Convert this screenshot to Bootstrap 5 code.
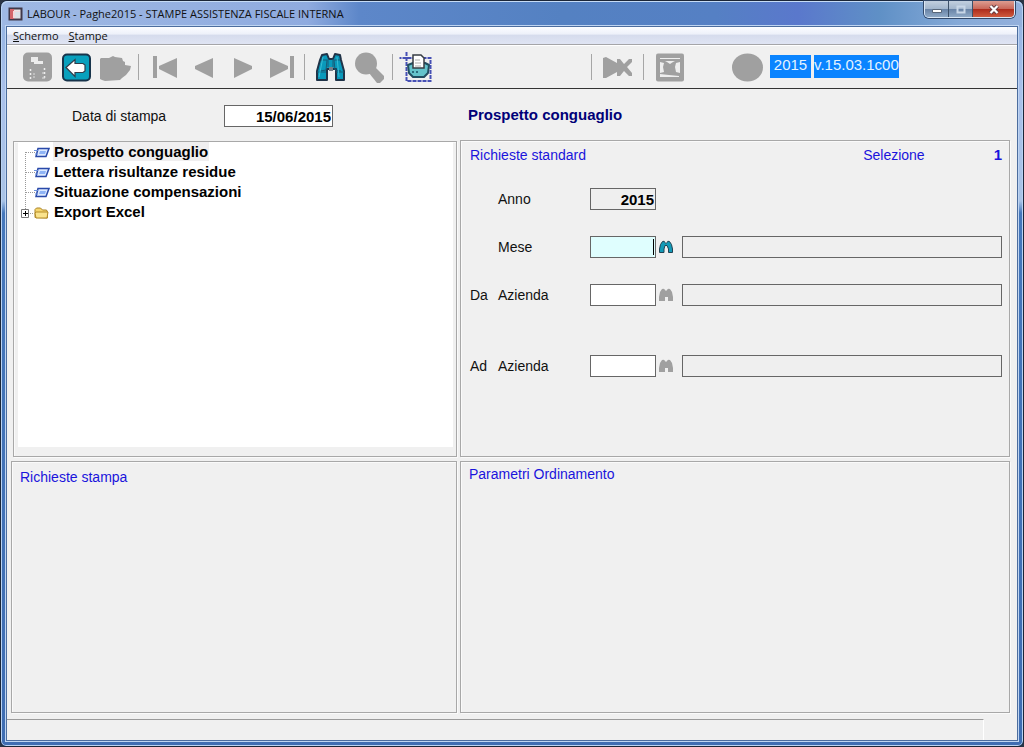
<!DOCTYPE html>
<html lang="it">
<head>
<meta charset="utf-8">
<meta name="viewport" content="width=device-width, initial-scale=1">
<title>LABOUR - Paghe2015</title>
<link href="https://cdn.jsdelivr.net/npm/bootstrap@5.3.0/dist/css/bootstrap.min.css" rel="stylesheet">
<style>
  body { background: #2a3444; font: 14px/20px "Liberation Sans", Arial, sans-serif; color: #111; }
  .window { border: 1px solid #1b2638; border-radius: 7px 7px 6px 6px; padding: 0 6px 6px;
    background: linear-gradient(#8fb0e0 0, #a9c0ea 90px, #a9c3e6 200px, #4577bb 212px, #3f6db2 100%);
    box-shadow: inset 0 0 0 1px #b9d3f3; }
  .titlebar { height: 26px; margin: 0 -5px; padding-left: 6px; gap: 3px; border-radius: 6px 6px 0 0;
    background: linear-gradient(90deg, #9fb9e4 0, #8fabdf 30%, #5d87c9 35%, #5481c2 55%, #5580c4 70%, #5a78cc 78%, #5f90c6 86%, #86aad8 94%, #93b0dc 100%);
    box-shadow: inset 0 1px #c6dcf6; }
  .ui-small { font: 11px/16px "Open Sans", "Noto Sans", sans-serif; color: #111; }
  .titlebar h1 { margin: 0; }
  .caption-set { height: 17px; margin-right: 7px; border: 1px solid #dbe7f5; border-top: 0; border-radius: 0 0 5px 5px; overflow: hidden; box-shadow: 0 0 0 1px #33496a; }
  .caption-set button { border: 0; padding: 0; width: 24px; line-height: 0; background: linear-gradient(#c2cfdf 0, #a3b6cd 48%, #6983a6 52%, #8fa9c6); border-right: 1px solid #3d5068; }
  .caption-set .shut { width: 41px; border: 0; background: linear-gradient(#dd9d91 0, #c9685a 48%, #ad2c1c 52%, #cf5a3e); }
  .client { background: #f0f0f0; box-shadow: 0 0 0 1px #4c6d9e, 0 0 0 2px #bfd5f2; }
  .menubar { height: 18px; padding: 1px 6px 0; gap: 10px; border-bottom: 1px solid #a5a5a8; background: linear-gradient(#fcfdff 0, #eef1fa 40%, #d6dced 50%, #dfe4f3 100%); }
  .menubar a { color: #111; text-decoration: none; }
  .toolstrip { height: 44px; padding-left: 11px; border-bottom: 1px solid #333; box-shadow: inset 0 1px #fff; }
  .toolstrip button, .lookup { border: 0; background: none; padding: 0; line-height: 0; color: #a0a0a0; }
  .toolstrip svg { width: 39px; height: 36px; }
  .rule { width: 1px; height: 26px; background: #a6a6a6; margin: 0 6px 0 3px; }
  .rule.roomy { margin-left: 6px; }
  .rule.push { margin-left: 153px; }
  .bulb { margin-left: 39px; }
  .tags { gap: 3px; margin-left: 3px; }
  .tag { background: #0a84ff; color: #e4f3ff; height: 23px; min-width: 41px; text-align: center; line-height: 19px; font-size: 15px; }
  .work { grid-template-columns: minmax(0, 446fr) minmax(0, 550fr); grid-template-rows: 51px auto 1fr; column-gap: 3px; padding: 0 7px 6px 4px; }
  .box { border: 1px solid #a8a8a8; box-shadow: inset 1px 1px #fafafa, 1px 1px #fafafa; }
  .blue { color: #1a14dc; font-size: 14px; line-height: 20px; margin: 0; font-weight: 400; }
  .count { font-size: 15px; font-weight: 700; padding-left: 69px; }
  .navy { color: #000078; font-size: 15px; line-height: 20px; margin: 0; font-weight: 700; }
  .field { height: 22px; border: 1px solid #666; border-radius: 0; background: #fff; padding: 0 1px; font-size: 15px; font-weight: 700; text-align: right; min-width: 0; width: 100%; color: #000; outline: 0; }
  .field.off { background: #efefef; }
  .field.on { background: #dffefe; }
  .stamp { padding: 3px 0 0 61px; }
  .stamp label { width: 152px; }
  .stamp .field { width: 109px; }
  .tree-box { margin: 1px 0 0 2px; padding: 0 3px 9px 4px; }
  .tree { background: #fff; list-style: none; padding: 0 0 0 3px; margin: 0; height: 100%; font-size: 15px; color: #000; }
  .tree li { height: 20px; }
  .tree button { border: 0; padding: 0 1px; background: none; font-weight: 700; line-height: 18px; height: 19px; color: #000; }
  .tree .chosen { background: #f0eff0; }
  .tree svg { width: 32px; height: 20px; flex: none; }
  .request { padding: 4px 7px 79px 9px; }
  .request-head { margin-bottom: 23px; }
  .line { display: grid; grid-template-columns: 28px 92px 66px 26px minmax(0, 1fr); align-items: center; margin-bottom: 26px; }
  .line label { grid-column: 1 / 3; display: grid; grid-template-columns: 28px 1fr; }
  .line label span:last-child { grid-column: 2; }
  .line:last-child { margin: 49px 0 0; }
  .lookup svg { width: 16px; height: 16px; margin-left: 2px; }
  .caret { position: absolute; right: 2px; top: 3px; width: 1px; height: 16px; background: #000; }
  .lower { padding: 5px 8px; }
  .lower.order { padding-top: 2px; }
  .status { height: 21px; }
  .status output { border-top: 1px solid #9a9a9a; border-right: 1px solid #fff; margin-right: 33px; }
</style>
</head>
<body>
<svg class="d-none">
  <symbol id="glasses" viewBox="0 0 16 16"><path d="M4 2q2-1 3 1l1 1 1-1q1-2 3-1l2 3 1 5v4h-5v-4H7v4H1v-4l1-5z" fill="currentColor"/></symbol>
  <symbol id="stem" viewBox="0 0 32 20"><path d="M4.500 0v20" stroke="#999" stroke-dasharray="1 1"/></symbol>
  <symbol id="page" viewBox="0 0 32 20"><path d="M4.500 10v10M5 10.500h9" stroke="#999" stroke-dasharray="1 1"/><path d="M17 6.500h11l-3 8H15z" fill="#dce9ff" stroke="#2949a9" stroke-width="1.500"/><path d="M13 8.500h4M14 12h3" stroke="#6c91dc"/><path d="M19 9h6l-1 3h-6z" fill="#8fb4f6"/></symbol>
</svg>
<div class="window min-vh-100 d-flex flex-column">
  <header class="titlebar d-flex align-items-center">
    <svg width="16" height="16"><path d="M1.500 2.500h12v11h-12z" fill="#e9e7e8" stroke="#403848" stroke-width="2"/><path d="M2 3h4v10H2z" fill="#d3656a"/><path d="M5 5h7v7H5z" fill="#f1d8da"/><path d="M7 6h5v6H7z" fill="#dbe1e6"/></svg>
    <h1 class="ui-small flex-grow-1 text-truncate">LABOUR - Paghe2015 - STAMPE ASSISTENZA FISCALE INTERNA</h1>
    <div class="caption-set d-flex align-self-start">
      <button type="button" aria-label="Riduci"><svg width="14" height="14"><path d="M2.500 7.500h9v3h-9z" fill="#fff" stroke="#59677a"/></svg></button>
      <button type="button" aria-label="Ingrandisci"><svg width="14" height="14"><path d="M3.500 4.500h7v6h-7z" fill="none" stroke="#c8d6e7" stroke-width="2"/></svg></button>
      <button type="button" class="shut" aria-label="Chiudi"><svg width="14" height="14"><path d="m3.500 4 7 7m0-7-7 7" stroke="#643d43" stroke-width="4"/><path d="m3.500 4 7 7m0-7-7 7" stroke="#fff" stroke-width="2.200"/></svg></button>
    </div>
  </header>
  <div class="client flex-grow-1 d-flex flex-column">
    <nav class="menubar ui-small d-flex"><a href="#"><u>S</u>chermo</a><a href="#"><u>S</u>tampe</a></nav>
    <div class="toolstrip d-flex align-items-center">
      <button type="button" aria-label="Salva"><svg viewBox="18 48 39 36"><rect x="23" y="51.500" width="29" height="29" rx="5" fill="#a0a0a0"/><path d="M31 56h7v4h5v3h-9v-2h-3z" fill="#ececec"/><path d="M30.500 68v10M44.500 67v10" stroke="#eee" stroke-width="1.500" stroke-dasharray="2 2"/><path d="M33 73h2m7-1h2m-11 4h2m7 1h3" stroke="#ddd"/></svg></button>
      <button type="button" aria-label="Indietro"><svg viewBox="57 48 39 36"><rect x="63" y="53.500" width="27" height="26" rx="4" fill="#08a0bd" stroke="#18344b" stroke-width="2"/><path d="m66 66.500 9-8v4h8l2 1.500v6l-2 1.500h-8v4z" fill="#fff" stroke="#303c4a" stroke-width="1.200"/></svg></button>
      <button type="button" aria-label="Apri"><svg viewBox="96 48 39 36"><path d="M100 58l1-1h8l4-2 2 1 7 1 1 3 2 1v3l6 1-1 4-4 5-4 3-2 2-15 1-3-1-2-1z" fill="#a0a0a0"/></svg></button>
      <span class="rule"></span>
      <button type="button" aria-label="Primo"><svg viewBox="145 48 39 36"><path d="M153 55h4v22h-4zM177 57v20l-18-9v-3z" fill="#a0a0a0"/></svg></button>
      <button type="button" aria-label="Precedente"><svg viewBox="184 48 39 36"><path d="M213 57v20l-18-9v-3z" fill="#a0a0a0"/></svg></button>
      <button type="button" aria-label="Successivo"><svg viewBox="223 48 39 36"><path d="M234 57v20l18-9v-3z" fill="#a0a0a0"/></svg></button>
      <button type="button" aria-label="Ultimo"><svg viewBox="262 48 39 36"><path d="M290 55h4v22h-4zM270 57v20l18-9v-3z" fill="#a0a0a0"/></svg></button>
      <span class="rule"></span>
      <button type="button" aria-label="Cerca"><svg viewBox="311 48 39 36"><path d="M322 54l5-1 2 5h4l2-5 5 1 1 5 3 11v9h-8v-11h-9v11h-10v-9l3-11z" fill="#0999bb" stroke="#203348" stroke-width="2" stroke-linejoin="round"/><path d="M321 59h6l-1 10-6 1M340 59h-6l1 10 6 1M317 71h9m10 0h8M328 58v8m5-8v8" fill="none" stroke="#175c79"/><path d="M323 56l-4 20M337 56l2 20" stroke="#38bcd4"/><path d="M329 66h4v4h-4z" fill="#777f89"/></svg></button>
      <button type="button" aria-label="Zoom"><svg viewBox="350 48 39 36"><circle cx="366" cy="62.500" r="11" fill="#a0a0a0"/><path d="m369 68 5-3 10 10v3l-4 4h-3l-8-10z" fill="#a0a0a0"/></svg></button>
      <span class="rule"></span>
      <button type="button" aria-label="Stampa"><svg viewBox="399 48 39 36"><path d="M406.500 51v29h24V57h-31" fill="none" stroke="#4650b4" stroke-width="2" stroke-dasharray="4 1"/><path d="M408 64l5-2h12l4 2-1 8-4 4h-11l-4-4z" fill="#64c3cb" stroke="#214d60" stroke-width="2" stroke-linejoin="round"/><path d="M413 54h8l3 3v10h-11z" fill="#fff" stroke="#373d43" stroke-width="1.500"/><path d="M415 59h5m-5 3h6m-6 3h6" stroke="#aaa"/><path d="M412 71h2m2 0h2" stroke="#174f63" stroke-width="1.500"/></svg></button>
      <span class="rule push"></span>
      <button type="button" aria-label="Annulla"><svg viewBox="599 48 39 36"><path d="M604 57l3-1 11 6v-4h3l4 5 5-5h3v3l-5 5 5 6v3h-3l-5-5-4 5h-3v-4l-11 6h-3z" fill="#a0a0a0"/></svg></button>
      <span class="rule roomy"></span>
      <button type="button" aria-label="Esci"><svg viewBox="650 48 39 36"><rect x="656" y="52.500" width="28" height="28" rx="2" fill="#a0a0a0"/><path d="M660 57.500h20" stroke="#eee"/><path d="m660 61 4 1-1 4 1 5-4 1zm20 0-4 1-1 4 1 5 4 1zM660 73l9 1 10 1v1h-19zM665 60h10l-2 1-3 2-3-2z" fill="#eee"/></svg></button>
      <button type="button" class="bulb" aria-label="Stato"><svg viewBox="728 48 39 36"><ellipse cx="747.500" cy="66.500" rx="15.500" ry="14" fill="#a0a0a0"/></svg></button>
      <div class="tags d-flex"><span class="tag">2015</span><span class="tag">v.15.03.1c00</span></div>
    </div>
    <main class="work d-grid flex-grow-1">
      <div class="stamp d-flex align-items-center">
        <label for="data">Data di stampa</label><input id="data" class="field" value="15/06/2015">
      </div>
      <div class="d-flex align-items-center ps-2"><h2 class="navy">Prospetto conguaglio</h2></div>

      <section class="box tree-box">
        <ul class="tree">
          <li class="d-flex"><svg><use href="#page"/></svg><button type="button" class="chosen">Prospetto conguaglio</button></li>
          <li class="d-flex"><svg><use href="#stem"/><use href="#page"/></svg><button type="button">Lettera risultanze residue</button></li>
          <li class="d-flex"><svg><use href="#stem"/><use href="#page"/></svg><button type="button">Situazione compensazioni</button></li>
          <li class="d-flex"><svg viewBox="22 202 32 20"><path d="M26.500 202v7M31 213.500h4" stroke="#999" stroke-dasharray="1 1"/><path d="M22.500 209.500h7v8h-7z" fill="#fff" stroke="#777"/><path d="M24 213.500h5M26.500 211v5" stroke="#000"/><path d="M36 217.500v-8l1.500-1.500h4l2 2h4l1 2v6z" fill="#f6d66e" stroke="#a98226"/><path d="M37 218l-1-5 1-1h12l-1 6z" fill="#fae38c" stroke="#b48b27"/></svg><button type="button">Export Excel</button></li>
        </ul>
      </section>

      <form class="box request">
        <div class="request-head d-flex">
          <h3 class="blue flex-grow-1">Richieste standard</h3>
          <span class="blue">Selezione</span><b class="blue count">1</b>
        </div>
        <div class="line"><label for="anno"><span>Anno</span></label><input id="anno" class="field off" value="2015" readonly></div>
        <div class="line"><label for="mese"><span>Mese</span></label><div class="position-relative d-flex"><input id="mese" class="field on"><i class="caret"></i></div><button type="button" class="lookup text-start" aria-label="Cerca mese"><svg viewBox="0 0 16 16"><path d="M4.500 2.500q2-1 2.500 1l1 1 1-1q.5-2 2.500-1l2 3 1 4.500v3.500h-4V10L9 6.500H7L6 10v3.500H1.500V10l1-4.500z" fill="#139ab7" stroke="#214252"/></svg></button><input class="field off" aria-label="Descrizione mese" readonly></div>
        <div class="line"><label for="da"><span>Da</span><span>Azienda</span></label><input id="da" class="field"><button type="button" class="lookup text-start" aria-label="Cerca azienda iniziale"><svg><use href="#glasses"/></svg></button><input class="field off" aria-label="Nome azienda iniziale" readonly></div>
        <div class="line"><label for="ad"><span>Ad</span><span>Azienda</span></label><input id="ad" class="field"><button type="button" class="lookup text-start" aria-label="Cerca azienda finale"><svg><use href="#glasses"/></svg></button><input class="field off" aria-label="Nome azienda finale" readonly></div>
      </form>

      <section class="box mt-1 lower"><h3 class="blue">Richieste stampa</h3></section>
      <section class="box mt-1 lower order"><h3 class="blue">Parametri Ordinamento</h3></section>
    </main>
    <footer class="status d-grid"><output></output></footer>
  </div>
</div>
<script src="https://cdn.jsdelivr.net/npm/bootstrap@5.3.0/dist/js/bootstrap.bundle.min.js"></script>
</body>
</html>
